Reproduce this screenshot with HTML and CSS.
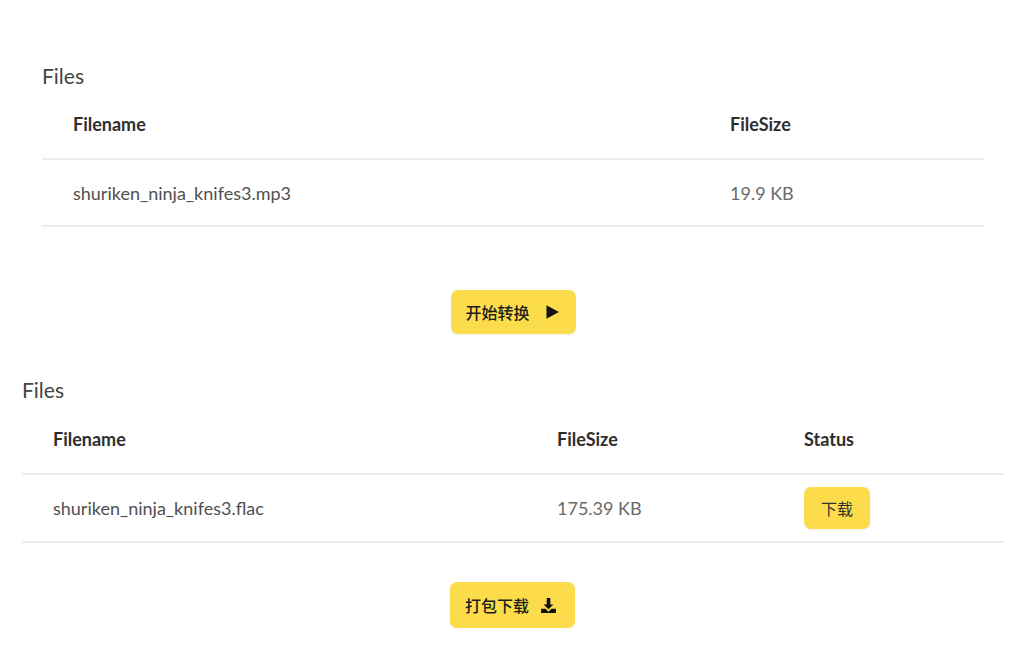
FILE: index.html
```html
<!DOCTYPE html>
<html lang="zh">
<head>
<meta charset="utf-8">
<title>Files</title>
<link rel="stylesheet" href="styles.css">
</head>
<body>
<div class="page">
  <section class="block block-upload">
    <h2 class="title">Files</h2>
    <table class="files files-upload">
      <thead>
        <tr><th class="c-name">Filename</th><th class="c-size">FileSize</th></tr>
      </thead>
      <tbody>
        <tr><td class="c-name">shuriken_ninja_knifes3.mp3</td><td class="c-size muted">19.9 KB</td></tr>
      </tbody>
    </table>
    <div class="actions actions-upload">
      <button class="btn">开始转换
        <svg class="ico" viewBox="0 0 13 14" width="13" height="14"><path d="M0.5 0.3 L12.8 7 L0.5 13.7 Z" fill="#111"/></svg>
      </button>
    </div>
  </section>

  <section class="block block-result">
    <h2 class="title">Files</h2>
    <table class="files files-result">
      <thead>
        <tr><th class="r-name">Filename</th><th class="r-size">FileSize</th><th class="r-status">Status</th></tr>
      </thead>
      <tbody>
        <tr>
          <td class="r-name">shuriken_ninja_knifes3.flac</td>
          <td class="r-size muted">175.39 KB</td>
          <td class="r-status"><button class="btn btn-small">下载</button></td>
        </tr>
      </tbody>
    </table>
    <div class="actions actions-result">
      <button class="btn">打包下载
        <svg class="ico" viewBox="0 0 16 16" width="17" height="17"><path d="M6.3 1h3.4v6h3L8 11.6 3.3 7h3z M1 11h4.2l2.8 2.8 2.8-2.8H15v4H1z" fill="#111"/></svg>
      </button>
    </div>
  </section>
</div>
</body>
</html>
```

FILE: styles.css
```css
* { box-sizing: border-box; }
html, body { margin: 0; padding: 0; background: #fff; }
body {
  font-family: Lato, "Noto Sans CJK SC", sans-serif;
  color: #333;
}
.page {
  padding: 0 21px 0 22px;
}
.block-upload {
  padding: 62px 19px 0 20px;
}
.block-result {
  padding-top: 42px;
}
.title {
  margin: 0;
  font-size: 21px;
  font-weight: 400;
  line-height: 28px;
  color: #444;
}
.files {
  width: 100%;
  border-collapse: collapse;
  font-size: 18px;
}
.files th, .files td {
  text-align: left;
  padding: 0 0 0 31px;
  height: 68px;
  border-bottom: 2px solid #ececec;
  vertical-align: middle;
}
.files th {
  height: 69px;
  font-weight: 700;
  color: #2e2e2e;
}
.files-upload td { height: 67px; }
.files-result th { height: 70px; }
.files td { color: #505050; }
.files td.muted { color: #6a6a6a; }
.files-upload .c-name { width: 657px; }
.files-result .r-name { width: 504px; }
.files-result .r-size { width: 247px; }
.actions {
  display: flex;
  justify-content: center;
}
.actions-upload { padding-top: 63px; }
.actions-result { padding-top: 39px; }
.btn {
  display: inline-flex;
  align-items: center;
  gap: 16px;
  height: 44px;
  padding: 0 17px 0 15px;
  background: #fcdc4b;
  border: none;
  border-radius: 7px;
  font-family: "Noto Sans CJK SC", sans-serif;
  font-size: 16px;
  font-weight: 500;
  color: #1c1c1c;
  box-shadow: 0 1px 2px rgba(0,0,0,0.06);
}
.actions .btn { width: 125px; }
.actions-result .btn { gap: 11px; height: 46px; }
.btn-small {
  height: 42px;
  width: 66px;
  justify-content: center;
  padding: 0;
  font-weight: 400;
  color: #333;
}
.ico { display: block; }
```
